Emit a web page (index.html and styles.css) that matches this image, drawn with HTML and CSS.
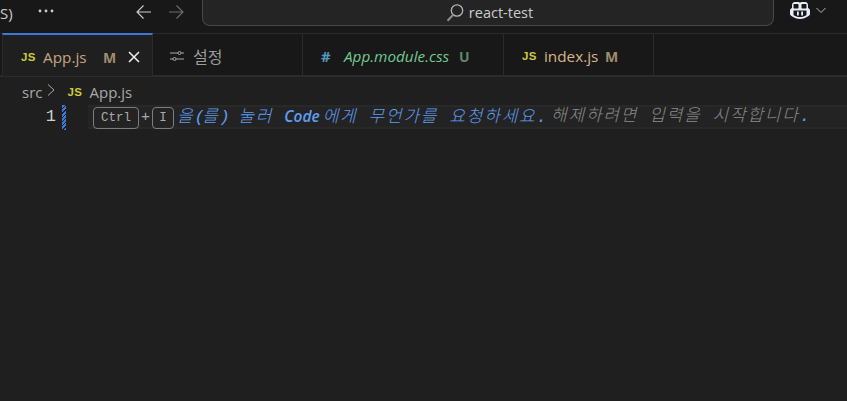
FILE: index.html
```html
<!DOCTYPE html>
<html lang="ko">
<head>
<meta charset="utf-8">
<title>react-test</title>
<link rel="stylesheet" href="styles.css">
</head>
<body>
<header class="titlebar">
  <span class="menu-cut">S)</span>
  <svg class="dots" viewBox="0 0 16 4"><circle cx="2" cy="2" r="1.400" fill="#ccc"/><circle cx="8" cy="2" r="1.400" fill="#ccc"/><circle cx="14" cy="2" r="1.400" fill="#ccc"/></svg>
  <div class="nav">
    <svg class="nav-icon" viewBox="0 0 18 18"><path d="M16 9H2M8.5 2.5 2 9l6.500 6.500" fill="none" stroke="#d0d0d0" stroke-width="1.100"/></svg>
    <svg class="nav-icon" viewBox="0 0 18 18"><path d="M2 9h14M9.500 2.500 16 9l-6.500 6.500" fill="none" stroke="#6f6f6f" stroke-width="1.100"/></svg>
  </div>
  <div class="command">
    <svg class="search" viewBox="0 0 20 20"><circle cx="12" cy="7.500" r="5.700" fill="none" stroke="#b4b4b4" stroke-width="1.300"/><path d="M8 12 2.500 17.800" stroke="#8e8e8e" stroke-width="2" fill="none"/></svg>
    <span>react-test</span>
  </div>
  <div class="copilot">
    <svg class="copilot-icon" viewBox="0 0 22 20"><path d="M6 1h3.500c1 0 1.300.6 1.500 1.300.2-.7.500-1.300 1.500-1.300H16c2 0 3 1.300 3 3.500v2.500c1.500.5 2 1.500 2 3v3c0 1.500-5 5-10 5s-10-3.500-10-5v-3c0-1.500.5-2.500 2-3V4.500C3 2.300 4 1 6 1Z" fill="#e6eef5"/><path d="M5.500 3h3c.7 0 1 .4 1 1v2.500c0 .7-.3 1-1 1h-3c-.7 0-1-.3-1-1V4c0-.6.300-1 1-1ZM13.500 3h3c.7 0 1 .4 1 1v2.500c0 .7-.3 1-1 1h-3c-.7 0-1-.3-1-1V4c0-.6.300-1 1-1ZM4.500 9.500h13V14c-2 1.500-4 2-6.500 2s-4.500-.5-6.500-2Z" fill="#181818"/><path d="M8 10.500h1.800v4H8zM12.200 10.500H14v4h-1.800z" fill="#e6eef5"/></svg>
    <svg class="chevron" viewBox="0 0 12 12"><path d="m1.500 4 4.500 4.500L10.500 4" fill="none" stroke="#b8b8b8" stroke-width="1"/></svg>
  </div>
</header>

<nav class="tabs">
  <div class="tab tab-active">
    <span class="js">JS</span><span class="name name-app">App.js</span><span class="badge badge-m">M</span>
    <svg class="close" viewBox="0 0 12 12"><path d="m1 1 10 10M11 1 1 11" stroke="#f0f0f0" stroke-width="1.500" fill="none"/></svg>
  </div>
  <div class="tab tab-settings">
    <svg class="sliders" viewBox="0 0 14 12"><path d="M0 3h8M11 3h3M0 9h3M6 9h8" stroke="#a8a8a8" stroke-width="1" fill="none"/><circle cx="9.500" cy="3" r="1.500" fill="none" stroke="#a8a8a8"/><circle cx="4.500" cy="9" r="1.500" fill="none" stroke="#a8a8a8"/></svg>
    <span class="name name-settings">설정</span>
  </div>
  <div class="tab tab-css">
    <span class="hash">#</span><span class="name name-css">App.module.css</span><span class="badge badge-u">U</span>
  </div>
  <div class="tab tab-index">
    <span class="js">JS</span><span class="name name-index">index.js</span><span class="badge badge-m">M</span>
  </div>
</nav>

<div class="breadcrumbs">
  <span>src</span>
  <svg class="crumb-sep" viewBox="0 0 8 12"><path d="m1 .5 6 5.500-6 5.500" fill="none" stroke="#a8a8a8" stroke-width="1"/></svg>
  <span class="js">JS</span>
  <span>App.js</span>
</div>

<main class="editor">
  <span class="line-no">1</span>
  <span class="gutter-mark"></span>
  <div class="line">
    <kbd class="key key-ctrl">Ctrl</kbd><span class="plus">+</span><kbd class="key key-i">I</kbd><em class="hint-blue">을<span class="paren">(</span>를<span class="paren">)</span> 눌러 <b>Code</b>에게 무언가를 요청하세요<span class="paren">.</span></em><em class="hint-gray">해제하려면 입력을 시작합니다<i class="dot">.</i></em>
  </div>
</main>
</body>
</html>
```
FILE: styles.css
```css
* { box-sizing: border-box; }
html, body { margin: 0; height: 100%; overflow: hidden; }
body {
  background: #1f1f1f;
  color: #ccc;
  font-family: "Open Sans", "Noto Sans CJK KR", sans-serif;
  display: flex;
  flex-direction: column;
}

.titlebar {
  height: 33px;
  flex: none;
  background: #181818;
  display: flex;
  align-items: flex-start;
}
.menu-cut {
  width: 38px;
  padding-top: 3px;
  font-size: 15px;
  line-height: 20px;
  color: #ccc;
}
.dots {
  width: 16px;
  height: 4px;
  margin-top: 9px;
  margin-right: 81px;
  flex: none;
}
.nav { display: flex; gap: 14px; width: 67px; padding-top: 3px; }
.nav-icon { width: 18px; height: 18px; }
.command {
  width: 572px;
  height: 26px;
  background: #242424;
  border: 1px solid #484848;
  border-top: 0;
  border-radius: 0 0 8px 8px;
  display: flex;
  justify-content: center;
  align-items: center;
  gap: 4px;
  font-size: 14.500px;
  color: #ccc;
  padding-left: 2px;
}
.search { width: 20px; height: 20px; }
.copilot { display: flex; align-items: center; margin-left: 15px; gap: 4px; height: 22px; }
.copilot-icon { width: 22px; height: 20px; }
.chevron { width: 12px; height: 12px; margin-top: -2px; }

.tabs {
  height: 44px;
  flex: none;
  background: #181818;
  border-top: 1px solid #2b2b2b;
  border-bottom: 2px solid #2b2b2b;
  display: flex;
  padding-left: 2px;
  font-size: 15.300px;
}
.tab {
  display: flex;
  align-items: center;
  border-right: 1px solid #2b2b2b;
  height: 41px;
  padding-top: 3px;
  flex: none;
}
.tab-active {
  width: 151px;
  height: 43px;
  margin-top: -1px;
  margin-bottom: -2px;
  background: #1f1f1f;
  border-left: 1px solid #2b2b2b;
  border-top: 2px solid #3b78d8;
  padding-left: 18px;
}
.tab-settings { width: 150px; padding-left: 17px; }
.tab-css { width: 201px; padding-left: 18px; }
.tab-index { width: 150px; padding-left: 18px; }
.js {
  color: #cbcb41;
  font-family: "Liberation Sans", sans-serif;
  font-size: 11.500px;
  font-weight: 700;
  letter-spacing: .3px;
  width: 22px;
  flex: none;
}
.name-app { color: #d9b487; width: 60px; }
.tab-active .name-app { color: #c9a583; }
.badge { font-weight: 700; font-size: 14px; }
.badge-m { color: #a08e6c; }
.close { width: 12px; height: 12px; margin-left: 12px; }
.sliders { width: 14px; height: 12px; margin-right: 9px; }
.name-settings { color: #9d9d9d; font-size: 16px; }
.hash {
  color: #519aba;
  font-weight: 700;
  font-size: 15px;
  width: 23px;
  flex: none;
}
.name-css { color: #73c991; font-style: italic; width: 115px; }
.badge-u { color: #5c8a6a; }
.name-index { color: #d9b487; width: 61px; }

.breadcrumbs {
  height: 26px;
  flex: none;
  padding: 4px 0 0 22px;
  display: flex;
  align-items: center;
  font-size: 15px;
  color: #a9a9a9;
}
.crumb-sep { width: 8px; height: 12px; margin: -4px 12px 0 5px; }
.breadcrumbs .js { width: 22px; }

.editor {
  display: flex;
  align-items: flex-start;
  height: 24px;
  flex: none;
  margin-top: 2px;
  font-family: "Liberation Mono", "Noto Sans CJK KR", monospace;
  font-size: 14px;
}
.line-no {
  width: 56px;
  padding-top: 2px;
  text-align: right;
  font-size: 17px;
  color: #d0d0d0;
  line-height: 20px;
}
.gutter-mark {
  width: 4px;
  height: 25px;
  margin-left: 6px;
  flex: none;
  background: repeating-linear-gradient(-45deg, #3b78d8 0 2px, #1f1f1f 2px 3px);
}
.line {
  margin-left: 22px;
  flex: 1;
  height: 24px;
  background: #232323;
  border-top: 2px solid #282828;
  border-bottom: 2px solid #282828;
  display: flex;
  align-items: center;
  padding-left: 5px;
  white-space: nowrap;
}
.key {
  display: block;
  font-family: "Liberation Mono", monospace;
  font-size: 12.500px;
  color: #aaa;
  height: 22px;
  line-height: 20px;
  border: 1px solid #7d7d7d;
  border-radius: 4px;
  text-align: center;
  flex: none;
  margin-top: 2px;
}
.key-ctrl { width: 46px; }
.key-i { width: 22px; }
.plus { color: #aaa; width: 13px; text-align: center; font-size: 15px; }
.hint-blue, .hint-gray {
  font-style: italic;
  font-weight: 300;
  font-size: 17px;
  line-height: 18px;
  letter-spacing: 1.800px;
  word-spacing: -1px;
  flex: none;
}
.paren { letter-spacing: -2.500px; }
.hint-blue {
  color: #5f9df0;
  margin-left: 3px;
  width: 374px;
}
.hint-blue b {
  font-family: "Open Sans", sans-serif;
  font-weight: 600;
  font-size: 15.500px;
  letter-spacing: 0;
  margin-right: 3px;
}
.hint-gray { color: #8a8a8a; }
.dot { color: #5f9df0; }
```
